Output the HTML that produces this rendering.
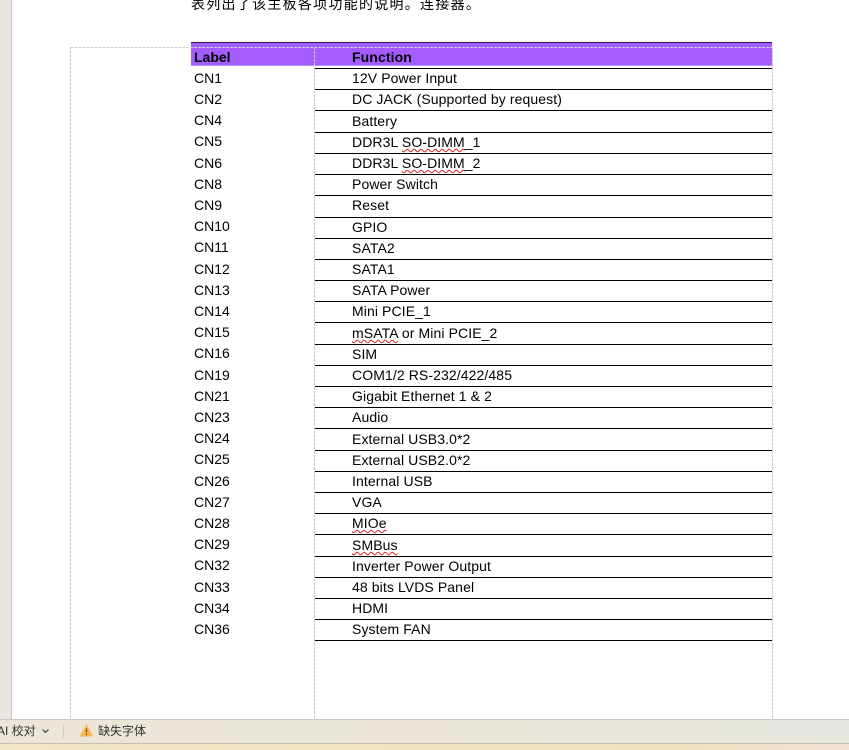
<!DOCTYPE html>
<html><head><meta charset="utf-8"><style>
html,body{margin:0;padding:0;width:849px;height:750px;overflow:hidden;background:#fff}
body{position:relative;font-family:"Liberation Sans","Noto Sans CJK SC",sans-serif;color:#000}
.a{position:absolute}
.l{position:absolute;left:194px;font-size:14px;line-height:20px;height:20px;white-space:nowrap}
.f{position:absolute;left:352px;font-size:14px;line-height:20px;height:20px;white-space:nowrap;letter-spacing:.1px}
.r{position:absolute;left:315px;width:457px;height:1px;background:#000}
.s{text-decoration:underline wavy #e02020 1px;text-underline-offset:1px}
.v{position:absolute;top:47px;width:1px;height:672px;background:repeating-linear-gradient(180deg,#c8c8c8 0 3px,transparent 3px 4px)}
</style></head><body>
<div class="a" style="left:0;top:0;width:11px;height:719px;background:#e8e6df"></div>
<div class="a" style="left:11px;top:0;width:1px;height:719px;background:#c4c2bc"></div>
<div class="a" style="left:191px;top:-5px;font:14px/18px 'WenQuanYi Zen Hei','Noto Sans CJK SC',sans-serif;letter-spacing:1.27px;white-space:nowrap">表列出了该主板各项功能的说明。连接器。</div>

<div class="a" style="left:191px;top:42px;width:581px;height:1px;background:#2a1a40"></div>
<div class="a" style="left:191px;top:43px;width:581px;height:22px;background:#a55cff"></div>
<div class="a" style="left:191px;top:65px;width:581px;height:1px;background:#bd8cff"></div>
<div class="l" style="top:47px;font-weight:bold">Label</div>
<div class="f" style="top:47px;font-weight:bold">Function</div>
<div class="a" style="left:70px;top:47px;width:702px;height:1px;background:repeating-linear-gradient(90deg,#d0d0d0 0 3px,transparent 3px 4px)"></div>
<div class="v" style="left:70px"></div>
<div class="v" style="left:314px"></div>
<div class="v" style="left:772px"></div>

<div class="r" style="top:68px"></div><div class="r" style="top:89px"></div><div class="r" style="top:110px"></div><div class="r" style="top:132px"></div><div class="r" style="top:153px"></div><div class="r" style="top:174px"></div><div class="r" style="top:195px"></div><div class="r" style="top:217px"></div><div class="r" style="top:238px"></div><div class="r" style="top:259px"></div><div class="r" style="top:280px"></div><div class="r" style="top:301px"></div><div class="r" style="top:322px"></div><div class="r" style="top:344px"></div><div class="r" style="top:365px"></div><div class="r" style="top:386px"></div><div class="r" style="top:407px"></div><div class="r" style="top:428px"></div><div class="r" style="top:450px"></div><div class="r" style="top:471px"></div><div class="r" style="top:492px"></div><div class="r" style="top:513px"></div><div class="r" style="top:534px"></div><div class="r" style="top:556px"></div><div class="r" style="top:577px"></div><div class="r" style="top:598px"></div><div class="r" style="top:619px"></div><div class="r" style="top:640px"></div>

<div class="l" style="top:68px">CN1</div>
<div class="l" style="top:89px">CN2</div>
<div class="l" style="top:110px">CN4</div>
<div class="l" style="top:131px">CN5</div>
<div class="l" style="top:153px">CN6</div>
<div class="l" style="top:174px">CN8</div>
<div class="l" style="top:195px">CN9</div>
<div class="l" style="top:216px">CN10</div>
<div class="l" style="top:237px">CN11</div>
<div class="l" style="top:259px">CN12</div>
<div class="l" style="top:280px">CN13</div>
<div class="l" style="top:301px">CN14</div>
<div class="l" style="top:322px">CN15</div>
<div class="l" style="top:343px">CN16</div>
<div class="l" style="top:365px">CN19</div>
<div class="l" style="top:386px">CN21</div>
<div class="l" style="top:407px">CN23</div>
<div class="l" style="top:428px">CN24</div>
<div class="l" style="top:449px">CN25</div>
<div class="l" style="top:471px">CN26</div>
<div class="l" style="top:492px">CN27</div>
<div class="l" style="top:513px">CN28</div>
<div class="l" style="top:534px">CN29</div>
<div class="l" style="top:555px">CN32</div>
<div class="l" style="top:577px">CN33</div>
<div class="l" style="top:598px">CN34</div>
<div class="l" style="top:619px">CN36</div>

<div class="f" style="top:68px">12V Power Input</div>
<div class="f" style="top:89px">DC JACK (Supported by request)</div>
<div class="f" style="top:111px">Battery</div>
<div class="f" style="top:132px">DDR3L <span class="s">SO-DIMM</span>_1</div>
<div class="f" style="top:153px">DDR3L <span class="s">SO-DIMM</span>_2</div>
<div class="f" style="top:174px">Power Switch</div>
<div class="f" style="top:195px">Reset</div>
<div class="f" style="top:217px">GPIO</div>
<div class="f" style="top:238px">SATA2</div>
<div class="f" style="top:259px">SATA1</div>
<div class="f" style="top:280px">SATA Power</div>
<div class="f" style="top:301px">Mini PCIE_1</div>
<div class="f" style="top:323px"><span class="s">mSATA</span> or Mini PCIE_2</div>
<div class="f" style="top:344px">SIM</div>
<div class="f" style="top:365px">COM1/2 RS-232/422/485</div>
<div class="f" style="top:386px">Gigabit Ethernet 1 &amp; 2</div>
<div class="f" style="top:407px">Audio</div>
<div class="f" style="top:429px">External USB3.0*2</div>
<div class="f" style="top:450px">External USB2.0*2</div>
<div class="f" style="top:471px">Internal USB</div>
<div class="f" style="top:492px">VGA</div>
<div class="f" style="top:513px"><span class="s">MIOe</span></div>
<div class="f" style="top:535px"><span class="s">SMBus</span></div>
<div class="f" style="top:556px">Inverter Power Output</div>
<div class="f" style="top:577px">48 bits LVDS Panel</div>
<div class="f" style="top:598px">HDMI</div>
<div class="f" style="top:619px">System FAN</div>

<div class="a" style="left:0;top:719px;width:849px;height:24px;background:linear-gradient(90deg,#ece6d8,#e9e4da 60%,#e5e5e0);border-top:1px solid #ccc8be;box-sizing:border-box"></div>
<div class="a" style="left:0;top:743px;width:849px;height:7px;background:linear-gradient(90deg,#f3e7c9,#efe0c0 80%,#f2e2d6);border-top:1px solid #c8bfb0;box-sizing:border-box"></div>
<div class="a" style="left:-3px;top:723px;font:12px/16px 'Liberation Sans','Noto Sans CJK SC',sans-serif;color:#333;white-space:nowrap">AI 校对</div>
<svg class="a" style="left:41px;top:728px" width="9" height="6" viewBox="0 0 9 6"><path d="M1.5 1.5L4.5 4.5L7.5 1.5" fill="none" stroke="#444" stroke-width="1.2"/></svg>
<div class="a" style="left:63px;top:724px;width:1px;height:14px;background:#d2cec4"></div>
<svg class="a" style="left:80px;top:724px" width="13" height="13" viewBox="0 0 13 13"><path d="M6.5 1L12.5 12H.5Z" fill="#f7b95a" stroke="#f7b95a" stroke-linejoin="round"/><path d="M6.5 4.5V8.5M6.5 9.6V11" stroke="#8a4a10" stroke-width="1.4"/></svg>
<div class="a" style="left:98px;top:723px;font:12px/16px 'Liberation Sans','Noto Sans CJK SC',sans-serif;color:#333;white-space:nowrap">缺失字体</div>
</body></html>
